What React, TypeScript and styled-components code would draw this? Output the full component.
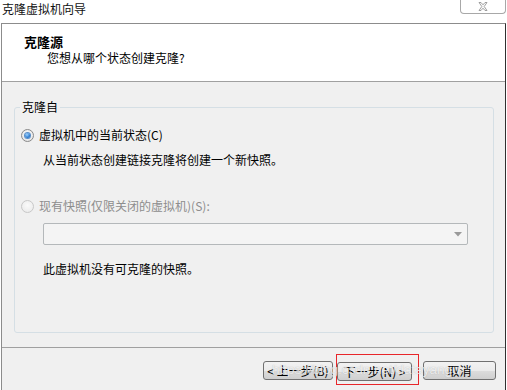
import React from "react";
import styled, { createGlobalStyle } from "styled-components";

const GlobalStyle = createGlobalStyle`
  html, body { margin: 0; padding: 0; background: #ffffff; }
  body {
    font-family: "Noto Sans CJK SC", "Liberation Sans", sans-serif;
    font-size: 12px;
    color: #000;
  }
`;

const Window = styled.div`
  width: 507px;
  height: 390px;
  display: flex;
  flex-direction: column;
  background: #ffffff;
  overflow: hidden;
`;

const TitleBar = styled.div`
  height: 23px;
  display: flex;
  justify-content: space-between;
  align-items: flex-start;
  flex-shrink: 0;
`;

const Title = styled.div`
  padding: 1px 0 0 2px;
  font-size: 12px;
  line-height: 16px;
  color: #111;
`;

const CloseButton = styled.div`
  width: 44px;
  height: 13px;
  margin-right: 1px;
  border: 1px solid #a8a8a8;
  border-top: none;
  border-radius: 0 0 4px 4px;
  display: flex;
  align-items: center;
  justify-content: center;
  background: #fff;
`;

const Frame = styled.div`
  flex: 1;
  margin: 0 1px;
  border-top: 1px solid #8c8c8c;
  border-left: 1px solid #8c8c8c;
  border-right: 1px solid #303030;
  display: flex;
  flex-direction: column;
  min-height: 0;
`;

const Header = styled.div`
  height: 58px;
  background: #ffffff;
  border-bottom: 1px solid #a0a0a0;
  padding: 10px 0 0 22px;
  box-sizing: border-box;
  flex-shrink: 0;
`;

const HeaderTitle = styled.div`
  font-size: 13px;
  font-weight: bold;
  line-height: 16px;
`;

const HeaderSub = styled.div`
  font-size: 12px;
  line-height: 16px;
  margin-left: 23px;
`;

const Body = styled.div`
  height: 265px;
  background: #f0f0f0;
  padding: 17px 11px 0 12px;
  box-sizing: border-box;
  flex-shrink: 0;
`;

const GroupBox = styled.fieldset`
  margin: 0;
  width: 480px;
  height: 234px;
  box-sizing: border-box;
  border: 1px solid #d5dfe5;
  border-radius: 3px;
  padding: 0 0 0 5px;
`;

const Legend = styled.legend`
  padding: 0 2px;
  font-size: 12px;
  line-height: 16px;
`;

const OptionRow = styled.div<{ $disabled?: boolean; $top: number }>`
  display: flex;
  align-items: center;
  margin-top: ${(p) => p.$top}px;
  line-height: 16px;
  color: ${(p) => (p.$disabled ? "#8d8d8d" : "#000")};
`;

const Radio = styled.span<{ $checked?: boolean; $disabled?: boolean }>`
  width: 11px;
  height: 11px;
  margin: 0 5px 0 1px;
  border-radius: 50%;
  border: 1px solid ${(p) => (p.$disabled ? "#c8c8c8" : "#8a8a8a")};
  background: ${(p) =>
    p.$disabled
      ? "radial-gradient(circle at 50% 40%, #fafafa, #e8e8e8)"
      : "radial-gradient(circle at 50% 40%, #ffffff, #dcdcdc)"};
  display: flex;
  align-items: center;
  justify-content: center;
  flex-shrink: 0;
  &::after {
    content: "";
    display: ${(p) => (p.$checked ? "block" : "none")};
    width: 5px;
    height: 5px;
    border-radius: 50%;
    background: radial-gradient(circle at 40% 35%, #9fd4ff, #1e6fc8 70%, #0b4b96);
    box-shadow: 0 0 0 1px #5a8fc9;
  }
`;

const Indented = styled.div<{ $top: number }>`
  margin: ${(p) => p.$top}px 0 0 23px;
  line-height: 16px;
`;

const Combo = styled.div`
  margin: 9px 0 0 23px;
  width: 425px;
  height: 22px;
  box-sizing: border-box;
  border: 1px solid #b4b8ba;
  border-radius: 2px;
  background: #f4f4f4;
  display: flex;
  align-items: center;
  justify-content: flex-end;
  padding-right: 5px;
`;

const Footer = styled.div`
  flex: 1;
  background: #f0f0f0;
  border-top: 1px solid #a0a0a0;
  display: flex;
  justify-content: flex-end;
  align-items: flex-start;
  padding: 6px 9px 0 0;
  position: relative;
`;

const Button = styled.div<{ $w: number }>`
  width: ${(p) => p.$w}px;
  height: 19px;
  box-sizing: border-box;
  margin-top: 7px;
  border: 1px solid #707070;
  border-radius: 3px;
  background: linear-gradient(#f2f2f2 0%, #ebebeb 50%, #dddddd 51%, #cfcfcf 100%);
  display: flex;
  align-items: center;
  justify-content: center;
  font-size: 12px;
  line-height: 16px;
  white-space: nowrap;
  color: #000;
`;

const Highlight = styled.div`
  border: 1px solid #e8262a;
  padding: 0 6px 4px 0;
  margin: 0 4px 0 3px;
  height: 31px;
  box-sizing: border-box;
`;

const Watermark = styled.div`
  position: absolute;
  left: 270px;
  top: 14px;
  font-family: "Liberation Sans", sans-serif;
  font-size: 13.5px;
  color: rgba(255, 255, 255, 0.75);
  text-shadow: 0 0 1px rgba(120, 120, 120, 0.5);
  pointer-events: none;
  white-space: nowrap;
`;

export default function App() {
  return (
    <>
      <GlobalStyle />
      <Window>
        <TitleBar>
          <Title>克隆虚拟机向导</Title>
          <CloseButton>
            <svg width="10" height="9" viewBox="0 0 10 9">
              <path
                d="M1 0.5 L3 0.5 L5 2.8 L7 0.5 L9 0.5 L6.2 4.5 L9 8.5 L7 8.5 L5 6.2 L3 8.5 L1 8.5 L3.8 4.5 Z"
                fill="#fafafa"
                stroke="#8a8a8a"
                strokeWidth="0.8"
              />
            </svg>
          </CloseButton>
        </TitleBar>
        <Frame>
          <Header>
            <HeaderTitle>克隆源</HeaderTitle>
            <HeaderSub>您想从哪个状态创建克隆?</HeaderSub>
          </Header>
          <Body>
            <GroupBox>
              <Legend>克隆自</Legend>
              <OptionRow $top={12}>
                <Radio $checked />
                虚拟机中的当前状态(C)
              </OptionRow>
              <Indented $top={9}>从当前状态创建链接克隆将创建一个新快照。</Indented>
              <OptionRow $top={30} $disabled>
                <Radio $disabled />
                现有快照(仅限关闭的虚拟机)(S):
              </OptionRow>
              <Combo>
                <svg width="8" height="5" viewBox="0 0 8 5">
                  <path d="M0 0 L8 0 L4 4.5 Z" fill="#9a9a9a" />
                </svg>
              </Combo>
              <Indented $top={16}>此虚拟机没有可克隆的快照。</Indented>
            </GroupBox>
          </Body>
          <Footer>
            <Button $w={70}>&lt; 上一步(B)</Button>
            <Highlight>
              <Button $w={75}>下一步(N) &gt;</Button>
            </Highlight>
            <Button $w={73}>取消</Button>
            <Watermark>https://blog.csdn.net/datayangu</Watermark>
          </Footer>
        </Frame>
      </Window>
    </>
  );
}
